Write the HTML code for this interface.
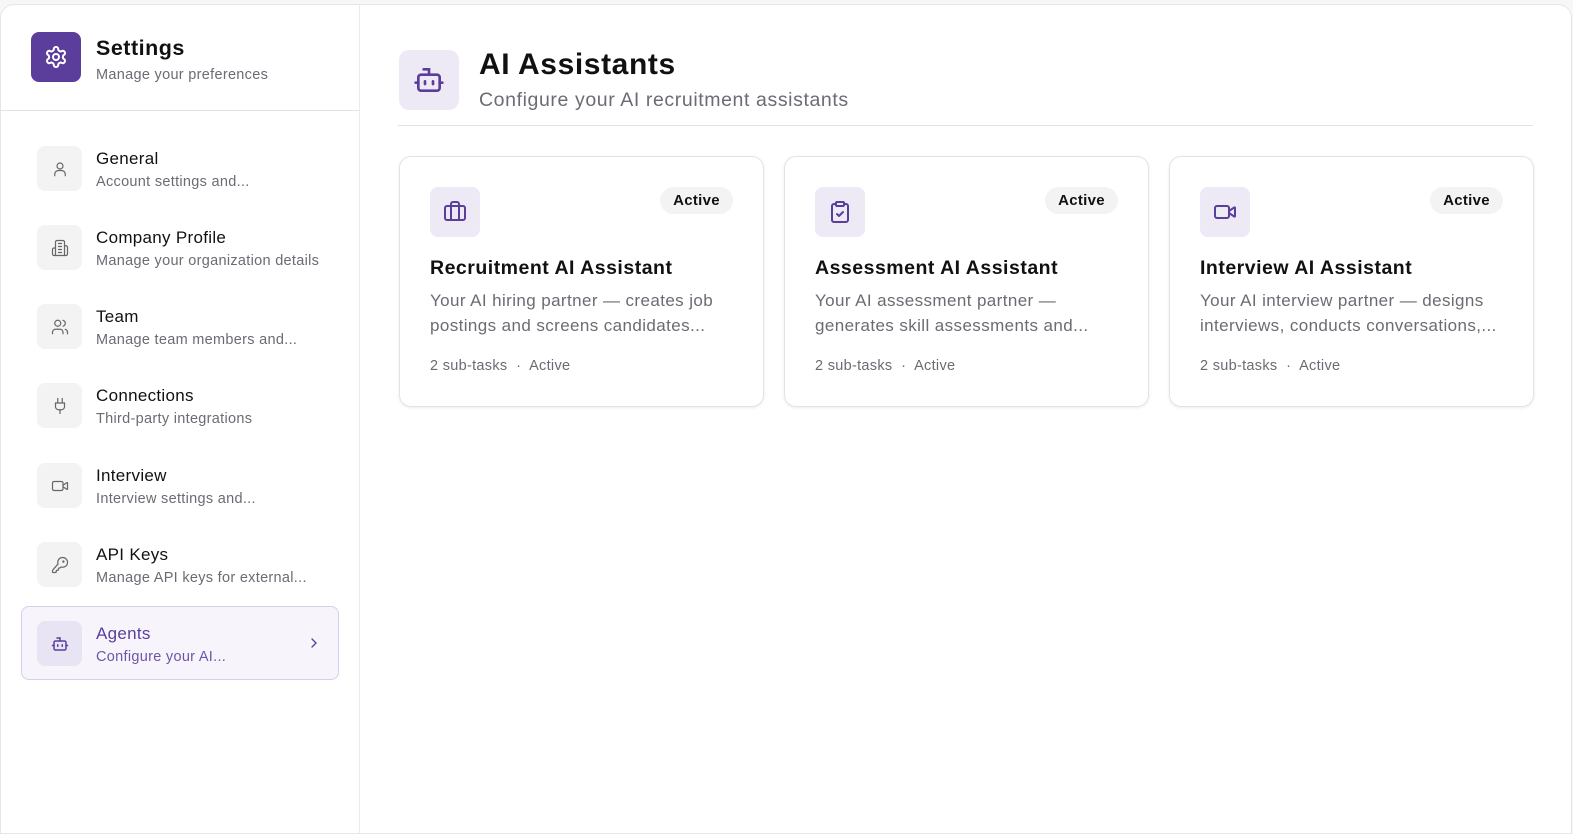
<!DOCTYPE html>
<html><head><meta charset="utf-8"><style>
*{box-sizing:border-box;margin:0;padding:0}
body{width:1573px;height:822px;background:#f7f7f8;font-family:"Liberation Sans",sans-serif;overflow:hidden;position:relative;letter-spacing:.3px}
.wrap{position:absolute;left:0;top:4px;width:1572px;height:830px;background:#fff;border:1px solid #e6e6e8;border-radius:14px 14px 0 0;overflow:hidden}
.side{position:absolute;left:0;top:0;width:359px;height:100%;border-right:1px solid #ebebed}
.shead{height:106px;border-bottom:1px solid #e3e3e6;position:relative}
.logo{position:absolute;left:30px;top:27px;width:50px;height:50px;border-radius:8px;background:#5b3e9b;display:flex;align-items:center;justify-content:center}
.st{position:absolute;left:95px;top:31px;font-size:21.5px;font-weight:bold;color:#111;letter-spacing:.5px}
.ss{position:absolute;left:95px;top:62px;font-size:14.5px;color:#6b6b73}
.item{position:absolute;left:20px;width:318px;height:74px;border-radius:8px}
.item .ib{position:absolute;left:16px;top:15px;width:45px;height:45px;border-radius:8px;background:#f3f3f4;display:flex;align-items:center;justify-content:center}
.item .t{position:absolute;left:75px;top:18px;font-size:17px;color:#111}
.item .d{position:absolute;left:75px;top:43px;font-size:14.5px;color:#6b6b73;white-space:nowrap}
.item.act{background:#f7f5fb;border:1px solid #d8cdec}
.item.act .ib{left:15px;top:14px;background:#e9e4f3}
.item.act .t{left:74px;top:17px;color:#5b3e9b}
.item.act .d{left:74px;top:42px;color:#6e55a8}
.hb{position:absolute;left:398px;top:45px;width:60px;height:60px;border-radius:10px;background:#eeeaf5;display:flex;align-items:center;justify-content:center}
.h1{position:absolute;left:478px;top:43px;font-size:30px;font-weight:bold;color:#111;letter-spacing:.6px}
.h2{position:absolute;left:478px;top:84px;font-size:19.5px;color:#6b6b73;letter-spacing:.6px}
.div{position:absolute;left:397px;top:120px;width:1135px;height:1px;background:#e3e3e6}
.card{position:absolute;top:151px;width:365px;height:251px;border:1px solid #e3e3e6;border-radius:12px;box-shadow:0 1px 3px rgba(0,0,0,.08)}
.card .ci{position:absolute;left:30px;top:30px;width:50px;height:50px;border-radius:8px;background:#eeeaf5;display:flex;align-items:center;justify-content:center}
.badge{position:absolute;right:30px;top:30px;width:73px;height:27px;border-radius:14px;background:#f3f3f4;font-size:15px;font-weight:bold;color:#111;text-align:center;line-height:27px}
.card .ct{position:absolute;left:30px;top:100px;font-size:19.5px;font-weight:bold;color:#111;letter-spacing:.5px}
.card .cd{position:absolute;left:30px;top:131px;width:300px;font-size:17px;line-height:25px;color:#6b6b73;letter-spacing:.4px}
.card .cm{position:absolute;left:30px;top:201px;font-size:14.5px;color:#6b6b73}
</style></head><body>
<div class="wrap">
<div class="side">
<div class="shead">
<div class="logo"><svg width="24" height="24" viewBox="0 0 24 24" fill="none" stroke="#fff" stroke-width="2" stroke-linecap="round" stroke-linejoin="round"><path d="M12.22 2h-.44a2 2 0 0 0-2 2v.18a2 2 0 0 1-1 1.73l-.43.25a2 2 0 0 1-2 0l-.15-.08a2 2 0 0 0-2.730.73l-.22.38a2 2 0 0 0 .73 2.73l.15.1a2 2 0 0 1 1 1.72v.51a2 2 0 0 1-1 1.74l-.15.09a2 2 0 0 0-.73 2.73l.22.38a2 2 0 0 0 2.73.73l.15-.08a2 2 0 0 1 2 0l.43.25a2 2 0 0 1 1 1.73V20a2 2 0 0 0 2 2h.44a2 2 0 0 0 2-2v-.18a2 2 0 0 1 1-1.730l.43-.25a2 2 0 0 1 2 0l.15.08a2 2 0 0 0 2.73-.73l.22-.39a2 2 0 0 0-.73-2.73l-.15-.08a2 2 0 0 1-1-1.74v-.5a2 2 0 0 1 1-1.74l.15-.09a2 2 0 0 0 .73-2.73l-.22-.38a2 2 0 0 0-2.73-.73l-.15.08a2 2 0 0 1-2 0l-.43-.25a2 2 0 0 1-1-1.73V4a2 2 0 0 0-2-2z"/><circle cx="12" cy="12" r="3"/></svg></div>
<div class="st">Settings</div><div class="ss">Manage your preferences</div>
</div>
<div class="item" style="top:126px"><div class="ib"><svg width="18" height="18" viewBox="0 0 24 24" fill="none" stroke="#666" stroke-width="1.6" stroke-linecap="round"><circle cx="12" cy="8" r="4"/><path d="M5 21v-2a5 5 0 0 1 5-5h4a5 5 0 0 1 5 5v2"/></svg></div><div class="t">General</div><div class="d">Account settings and...</div></div>
<div class="item" style="top:205px"><div class="ib"><svg width="18" height="18" viewBox="0 0 24 24" fill="none" stroke="#666" stroke-width="1.6" stroke-linecap="round" stroke-linejoin="round"><path d="M6 22V4a2 2 0 0 1 2-2h8a2 2 0 0 1 2 2v18z"/><path d="M6 12H4a2 2 0 0 0-2 2v6a2 2 0 0 0 2 2h2M18 9h2a2 2 0 0 1 2 2v9a2 2 0 0 1-2 2h-2M10 6h4M10 10h4M10 14h4M10 18h4"/></svg></div><div class="t">Company Profile</div><div class="d">Manage your organization details</div></div>
<div class="item" style="top:284px"><div class="ib"><svg width="18" height="18" viewBox="0 0 24 24" fill="none" stroke="#666" stroke-width="1.6" stroke-linecap="round"><path d="M16 21v-2a4 4 0 0 0-4-4H6a4 4 0 0 0-4 4v2"/><circle cx="9" cy="7" r="4"/><path d="M22 21v-2a4 4 0 0 0-3-3.87M16 3.13a4 4 0 0 1 0 7.75"/></svg></div><div class="t">Team</div><div class="d">Manage team members and...</div></div>
<div class="item" style="top:363px"><div class="ib"><svg width="18" height="18" viewBox="0 0 24 24" fill="none" stroke="#666" stroke-width="1.6" stroke-linecap="round"><path d="M12 22v-5M9 8V2M15 8V2M18 8v5a4 4 0 0 1-4 4h-4a4 4 0 0 1-4-4V8z"/></svg></div><div class="t">Connections</div><div class="d">Third-party integrations</div></div>
<div class="item" style="top:443px"><div class="ib"><svg width="18" height="18" viewBox="0 0 24 24" fill="none" stroke="#666" stroke-width="1.6" stroke-linejoin="round"><path d="m16 13 5.2 3.5a.5.5 0 0 0 .8-.4V7.9a.5.5 0 0 0-.8-.4L16 11"/><rect x="2" y="6" width="14" height="12" rx="2"/></svg></div><div class="t">Interview</div><div class="d">Interview settings and...</div></div>
<div class="item" style="top:522px"><div class="ib"><svg width="18" height="18" viewBox="0 0 24 24" fill="none" stroke="#666" stroke-width="1.6" stroke-linecap="round"><path d="M2.6 18.4A2 2 0 0 0 2 19.8V21a1 1 0 0 0 1 1h3a1 1 0 0 0 1-1v-1a1 1 0 0 1 1-1h1a1 1 0 0 0 1-1v-1a1 1 0 0 1 1-1h.2a2 2 0 0 0 1.4-.6l.8-.8a6.5 6.5 0 1 0-4-4z"/><circle cx="16.5" cy="7.5" r=".8"/></svg></div><div class="t">API Keys</div><div class="d">Manage API keys for external...</div></div>
<div class="item act" style="top:601px"><div class="ib"><svg width="18" height="18" viewBox="0 0 24 24" fill="none" stroke="#5b3e9b" stroke-width="2" stroke-linecap="round"><path d="M12 8V4H8"/><rect x="4" y="8" width="16" height="12" rx="2"/><path d="M2 14h2M20 14h2M15 13v2M9 13v2"/></svg></div><div class="t">Agents</div><div class="d">Configure your AI...</div>
<svg style="position:absolute;left:284px;top:28px" width="16" height="16" viewBox="0 0 24 24" fill="none" stroke="#5b3e9b" stroke-width="2" stroke-linecap="round"><path d="m9 6 6 6-6 6"/></svg></div>
</div>
<div class="hb"><svg width="32" height="32" viewBox="0 0 24 24" fill="none" stroke="#5b3e9b" stroke-width="2" stroke-linecap="round"><path d="M12 8V4H8"/><rect x="4" y="8" width="16" height="12" rx="2"/><path d="M2 14h2M20 14h2M15 13v2M9 13v2"/></svg></div>
<div class="h1">AI Assistants</div><div class="h2">Configure your AI recruitment assistants</div>
<div class="div"></div>
<div class="card" style="left:398px"><div class="ci"><svg width="24" height="24" viewBox="0 0 24 24" fill="none" stroke="#5b3e9b" stroke-width="2" stroke-linecap="round"><path d="M16 20V4a2 2 0 0 0-2-2h-4a2 2 0 0 0-2 2v16"/><rect x="2" y="6" width="20" height="14" rx="2"/></svg></div><div class="badge">Active</div><div class="ct">Recruitment AI Assistant</div><div class="cd">Your AI hiring partner — creates job postings and screens candidates...</div><div class="cm">2 sub-tasks &nbsp;·&nbsp; Active</div></div>
<div class="card" style="left:783px"><div class="ci"><svg width="24" height="24" viewBox="0 0 24 24" fill="none" stroke="#5b3e9b" stroke-width="2" stroke-linecap="round" stroke-linejoin="round"><rect x="8" y="2" width="8" height="4" rx="1"/><path d="M16 4h2a2 2 0 0 1 2 2v14a2 2 0 0 1-2 2H6a2 2 0 0 1-2-2V6a2 2 0 0 1 2-2h2"/><path d="m9 14 2 2 4-4"/></svg></div><div class="badge">Active</div><div class="ct">Assessment AI Assistant</div><div class="cd">Your AI assessment partner — generates skill assessments and...</div><div class="cm">2 sub-tasks &nbsp;·&nbsp; Active</div></div>
<div class="card" style="left:1168px"><div class="ci"><svg width="24" height="24" viewBox="0 0 24 24" fill="none" stroke="#5b3e9b" stroke-width="2" stroke-linejoin="round"><path d="m16 13 5.2 3.5a.5.5 0 0 0 .8-.4V7.9a.5.5 0 0 0-.8-.4L16 11"/><rect x="2" y="6" width="14" height="12" rx="2"/></svg></div><div class="badge">Active</div><div class="ct">Interview AI Assistant</div><div class="cd">Your AI interview partner — designs interviews, conducts conversations,...</div><div class="cm">2 sub-tasks &nbsp;·&nbsp; Active</div></div>
</div>
</body></html>
